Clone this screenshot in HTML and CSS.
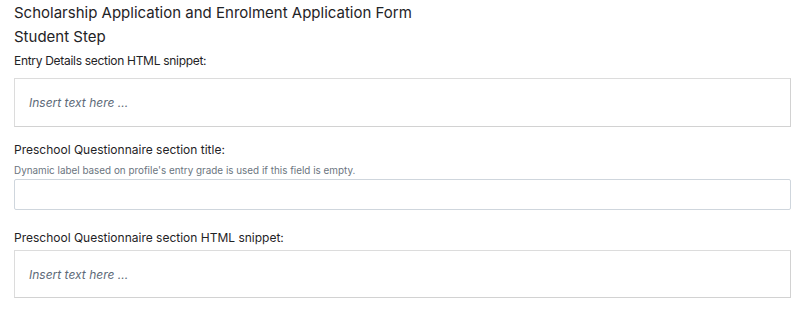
FILE: index.html
```html
<!DOCTYPE html>
<html lang="en">
<head>
    <meta charset="UTF-8">
    <title>Student Step</title>
    <link rel="stylesheet" href="styles.css">
</head>
<body>
    <div class="form">
        <h2 class="form-title">Scholarship Application and Enrolment Application Form</h2>
        <h3 class="step-title">Student Step</h3>

        <div class="field first">
            <label>Entry Details section HTML snippet:</label>
            <div class="editor"><span class="placeholder">Insert text here ...</span></div>
        </div>

        <div class="field">
            <label for="preschool-title">Preschool Questionnaire section title:</label>
            <div class="hint">Dynamic label based on profile's entry grade is used if this field is empty.</div>
            <input id="preschool-title" class="text-input" />
        </div>

        <div class="field last">
            <label>Preschool Questionnaire section HTML snippet:</label>
            <div class="editor"><span class="placeholder">Insert text here ...</span></div>
        </div>
    </div>
</body>
</html>
```

FILE: styles.css
```css
body {
    font-family: Inter, "Noto Sans", sans-serif;
    margin: 0;
    padding: 0;
    background-color: #ffffff;
    color: #1f2326;
}
.form {
    width: 777px;
    padding: 4px 0 0 14px;
}
.form-title {
    font-size: 15px;
    font-weight: 400;
    margin: 0;
    line-height: 18px;
}
.step-title {
    font-size: 15px;
    font-weight: 400;
    margin: 6px 0 0 0;
    line-height: 18px;
}
.field {
    margin-top: 15px;
}
.field.first {
    margin-top: 7px;
}
label {
    display: block;
    font-size: 12px;
    line-height: 16px;
    margin-bottom: 6px;
}
.field.first label {
    letter-spacing: -0.3px;
    margin-bottom: 9px;
}
.field.last {
    margin-top: 20px;
}
.field.last label {
    margin-bottom: 4px;
}
.hint {
    font-size: 9.9px;
    color: #6b7580;
    margin: 3px 0 3px 0;
    line-height: 12px;
}
.editor {
    border: 1px solid #dcdcdc;
    border-bottom-color: #d2d2d2;
    border-right-color: #d2d2d2;
    height: 47px;
    padding: 0 14px;
    display: flex;
    align-items: center;
}
.field.last .editor {
    height: 46px;
}
.placeholder {
    font-size: 12px;
    font-style: italic;
    color: #5d6a78;
}
.text-input {
    display: block;
    box-sizing: border-box;
    width: 100%;
    height: 31px;
    border: 1px solid #cfd6dd;
    border-radius: 2px;
    font-family: inherit;
    font-size: 13px;
    margin: 0;
}
```
